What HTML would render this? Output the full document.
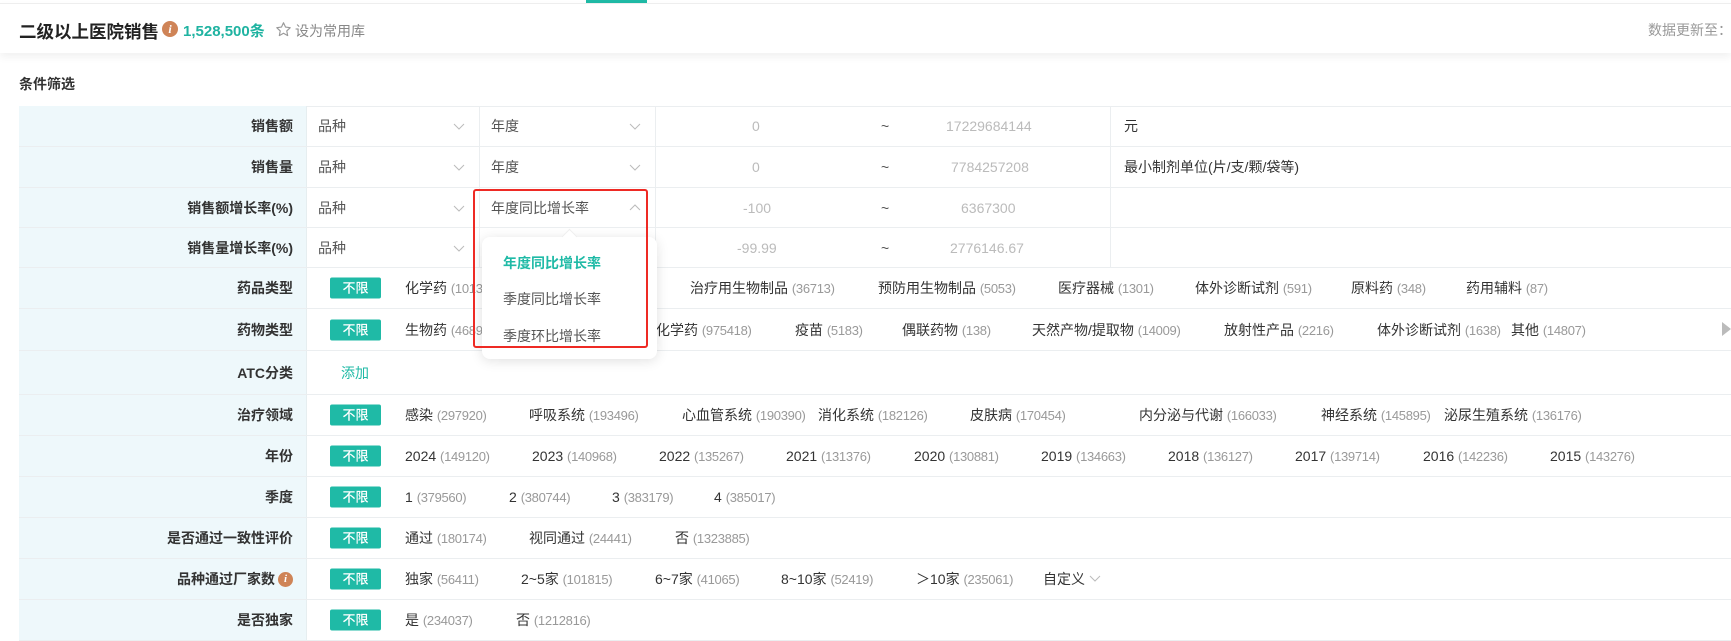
<!DOCTYPE html>
<html><head><meta charset="utf-8"><style>
*{margin:0;padding:0;box-sizing:border-box}
body{width:1731px;height:622px;overflow:hidden;background:#fff;font-family:"Liberation Sans","Noto Sans CJK SC",sans-serif;color:#333;position:relative}
.a{position:absolute;white-space:nowrap}
.hdr{position:absolute;left:0;top:3px;width:1731px;height:50px;background:#fff;box-shadow:0 4px 8px rgba(0,0,0,.06);border-top:1px solid #eee}
.row{position:absolute;left:19px;width:1712px;border-bottom:1px solid #ebeef0}
.lab{position:absolute;left:0;top:0;bottom:0;width:288px;background:#eef8fb;border-right:1px solid #e6eef0;text-align:right;padding-right:13px;font-size:14px;font-weight:bold;color:#333;display:flex;align-items:center;justify-content:flex-end}
.it{position:absolute;top:50%;transform:translateY(-50%);font-size:14px;color:#333;white-space:nowrap}
.it i{font-style:normal;color:#999;font-size:13px;letter-spacing:-0.3px}
.tag{position:absolute;left:311px;top:50%;transform:translateY(-50%);width:51px;height:21px;background:#1fbaa6;color:#fff;font-size:13px;text-align:center;line-height:21px;border-radius:2px;font-weight:500}
.sel{position:absolute;top:0;bottom:0;border-right:1px solid #ebeef0;font-size:14px;color:#555;display:flex;align-items:center;padding-left:11px}
.chev{position:absolute;right:14px;top:50%;margin-top:-6px}
.rg{position:absolute;top:50%;transform:translateY(-50%);font-size:14px;color:#bbb}
</style></head><body>
<div class="a" style="left:586px;top:0;width:61px;height:3px;background:#1fbaa6"></div>
<div class="hdr"></div>
<div class="a" style="left:19px;top:19px;font-size:17.5px;font-weight:bold;color:#222">二级以上医院销售</div>
<div class="a" style="left:162px;top:21px;width:16px;height:16px;border-radius:50%;background:#cf8457;color:#fff;font-size:12px;font-weight:bold;text-align:center;line-height:16px;font-style:italic;font-family:'Liberation Serif',serif">i</div>
<div class="a" style="left:183px;top:20px;font-size:15px;font-weight:bold;color:#1fb3a1">1,528,500条</div>
<svg class="a" style="left:275px;top:21px" width="17" height="17" viewBox="0 0 24 24"><path d="M12 2.5l2.9 6.1 6.6.8-4.9 4.6 1.3 6.6L12 17.3l-5.9 3.3 1.3-6.6-4.9-4.6 6.6-.8z" fill="none" stroke="#999" stroke-width="1.6" stroke-linejoin="round"/></svg>
<div class="a" style="left:295px;top:21px;font-size:14px;color:#888">设为常用库</div>
<div class="a" style="left:1648px;top:20px;font-size:14px;color:#999">数据更新至：</div>
<div class="a" style="left:19px;top:74px;font-size:14px;font-weight:bold;color:#333">条件筛选</div>

<div class="a" style="left:19px;top:106px;width:1712px;border-top:1px solid #ebeef0"></div>

<div class="row" style="top:106px;height:41px"><div class="lab">销售额</div>
<div class="sel" style="left:288px;width:173px">品种<svg class="chev" width="12" height="12" viewBox="0 0 12 12"><path d="M1 4l5 5 5-5" fill="none" stroke="#bbb"/></svg></div>
<div class="sel" style="left:461px;width:176px">年度<svg class="chev" width="12" height="12" viewBox="0 0 12 12"><path d="M1 4l5 5 5-5" fill="none" stroke="#bbb"/></svg></div>
<div class="sel" style="left:637px;width:455px"></div>
<div class="rg" style="left:733px">0</div><div class="rg" style="left:862px;color:#555">~</div><div class="rg" style="left:927px">17229684144</div>
<div class="it" style="left:1105px">元</div></div>

<div class="row" style="top:147px;height:41px"><div class="lab">销售量</div>
<div class="sel" style="left:288px;width:173px">品种<svg class="chev" width="12" height="12" viewBox="0 0 12 12"><path d="M1 4l5 5 5-5" fill="none" stroke="#bbb"/></svg></div>
<div class="sel" style="left:461px;width:176px">年度<svg class="chev" width="12" height="12" viewBox="0 0 12 12"><path d="M1 4l5 5 5-5" fill="none" stroke="#bbb"/></svg></div>
<div class="sel" style="left:637px;width:455px"></div>
<div class="rg" style="left:733px">0</div><div class="rg" style="left:862px;color:#555">~</div><div class="rg" style="left:932px">7784257208</div>
<div class="it" style="left:1105px">最小制剂单位(片/支/颗/袋等)</div></div>

<div class="row" style="top:188px;height:40px"><div class="lab">销售额增长率(%)</div>
<div class="sel" style="left:288px;width:173px">品种<svg class="chev" width="12" height="12" viewBox="0 0 12 12"><path d="M1 4l5 5 5-5" fill="none" stroke="#bbb"/></svg></div>
<div class="sel" style="left:461px;width:176px">年度同比增长率<svg class="chev" width="12" height="12" viewBox="0 0 12 12"><path d="M1 8l5-5 5 5" fill="none" stroke="#bbb"/></svg></div>
<div class="sel" style="left:637px;width:455px"></div>
<div class="rg" style="left:724px">-100</div><div class="rg" style="left:862px;color:#555">~</div><div class="rg" style="left:942px">6367300</div></div>

<div class="row" style="top:228px;height:40px"><div class="lab">销售量增长率(%)</div>
<div class="sel" style="left:288px;width:173px">品种<svg class="chev" width="12" height="12" viewBox="0 0 12 12"><path d="M1 4l5 5 5-5" fill="none" stroke="#bbb"/></svg></div>
<div class="sel" style="left:461px;width:176px"></div>
<div class="sel" style="left:637px;width:455px"></div>
<div class="rg" style="left:718px">-99.99</div><div class="rg" style="left:862px;color:#555">~</div><div class="rg" style="left:931px">2776146.67</div></div>

<div class="row" style="top:268px;height:41px"><div class="lab">药品类型</div><div class="tag">不限</div>
<div class="it" style="left:386px">化学药 <i>(1013178)</i></div><div class="it" style="left:671px">治疗用生物制品 <i>(36713)</i></div><div class="it" style="left:859px">预防用生物制品 <i>(5053)</i></div><div class="it" style="left:1039px">医疗器械 <i>(1301)</i></div><div class="it" style="left:1176px">体外诊断试剂 <i>(591)</i></div><div class="it" style="left:1332px">原料药 <i>(348)</i></div><div class="it" style="left:1447px">药用辅料 <i>(87)</i></div></div>

<div class="row" style="top:309px;height:42px"><div class="lab">药物类型</div><div class="tag">不限</div>
<div class="it" style="left:386px">生物药 <i>(46890)</i></div><div class="it" style="left:637px">化学药 <i>(975418)</i></div><div class="it" style="left:776px">疫苗 <i>(5183)</i></div><div class="it" style="left:883px">偶联药物 <i>(138)</i></div><div class="it" style="left:1013px">天然产物/提取物 <i>(14009)</i></div><div class="it" style="left:1205px">放射性产品 <i>(2216)</i></div><div class="it" style="left:1358px">体外诊断试剂 <i>(1638)</i></div><div class="it" style="left:1492px">其他 <i>(14807)</i></div>
<svg class="a" style="left:1703px;top:13px" width="9" height="14"><path d="M0 0l9 7-9 7z" fill="#bbb"/></svg></div>

<div class="row" style="top:351px;height:44px"><div class="lab">ATC分类</div><div class="it" style="left:322px;color:#1fbaa6">添加</div></div>

<div class="row" style="top:395px;height:41px"><div class="lab">治疗领域</div><div class="tag">不限</div>
<div class="it" style="left:386px">感染 <i>(297920)</i></div><div class="it" style="left:510px">呼吸系统 <i>(193496)</i></div><div class="it" style="left:663px">心血管系统 <i>(190390)</i></div><div class="it" style="left:799px">消化系统 <i>(182126)</i></div><div class="it" style="left:951px">皮肤病 <i>(170454)</i></div><div class="it" style="left:1120px">内分泌与代谢 <i>(166033)</i></div><div class="it" style="left:1302px">神经系统 <i>(145895)</i></div><div class="it" style="left:1425px">泌尿生殖系统 <i>(136176)</i></div></div>

<div class="row" style="top:436px;height:41px"><div class="lab">年份</div><div class="tag">不限</div>
<div class="it" style="left:386px">2024 <i>(149120)</i></div><div class="it" style="left:513px">2023 <i>(140968)</i></div><div class="it" style="left:640px">2022 <i>(135267)</i></div><div class="it" style="left:767px">2021 <i>(131376)</i></div><div class="it" style="left:895px">2020 <i>(130881)</i></div><div class="it" style="left:1022px">2019 <i>(134663)</i></div><div class="it" style="left:1149px">2018 <i>(136127)</i></div><div class="it" style="left:1276px">2017 <i>(139714)</i></div><div class="it" style="left:1404px">2016 <i>(142236)</i></div><div class="it" style="left:1531px">2015 <i>(143276)</i></div></div>

<div class="row" style="top:477px;height:41px"><div class="lab">季度</div><div class="tag">不限</div>
<div class="it" style="left:386px">1 <i>(379560)</i></div><div class="it" style="left:490px">2 <i>(380744)</i></div><div class="it" style="left:593px">3 <i>(383179)</i></div><div class="it" style="left:695px">4 <i>(385017)</i></div></div>

<div class="row" style="top:518px;height:41px"><div class="lab">是否通过一致性评价</div><div class="tag">不限</div>
<div class="it" style="left:386px">通过 <i>(180174)</i></div><div class="it" style="left:510px">视同通过 <i>(24441)</i></div><div class="it" style="left:656px">否 <i>(1323885)</i></div></div>

<div class="row" style="top:559px;height:41px"><div class="lab">品种通过厂家数 <span style="display:inline-block;width:15px;height:15px;border-radius:50%;background:#cf8457;color:#fff;font-size:11px;text-align:center;line-height:15px;font-style:italic;font-family:'Liberation Serif',serif;margin-left:3px">i</span></div><div class="tag">不限</div>
<div class="it" style="left:386px">独家 <i>(56411)</i></div><div class="it" style="left:502px">2~5家 <i>(101815)</i></div><div class="it" style="left:636px">6~7家 <i>(41065)</i></div><div class="it" style="left:762px">8~10家 <i>(52419)</i></div><div class="it" style="left:897px">＞10家 <i>(235061)</i></div><div class="it" style="left:1024px">自定义 <svg width="12" height="12" viewBox="0 0 12 12"><path d="M1 4l5 5 5-5" fill="none" stroke="#bbb"/></svg></div></div>

<div class="row" style="top:600px;height:41px"><div class="lab">是否独家</div><div class="tag">不限</div>
<div class="it" style="left:386px">是 <i>(234037)</i></div><div class="it" style="left:497px">否 <i>(1212816)</i></div></div>

<div class="a" style="left:482px;top:237px;width:175px;height:122px;background:#fff;border-radius:8px;box-shadow:0 2px 12px rgba(0,0,0,.12)"></div>
<div class="a" style="left:564px;top:231px;width:11px;height:11px;background:#fff;transform:rotate(45deg);border-left:1px solid #eee;border-top:1px solid #eee"></div>
<div class="a" style="left:503px;top:253px;font-size:14px;font-weight:bold;color:#1fbaa6">年度同比增长率</div>
<div class="a" style="left:503px;top:289px;font-size:14px;color:#555">季度同比增长率</div>
<div class="a" style="left:503px;top:326px;font-size:14px;color:#555">季度环比增长率</div>
<div class="a" style="left:473px;top:189px;width:175px;height:159px;border:2px solid #ee2a24;border-radius:3px"></div>
</body></html>
